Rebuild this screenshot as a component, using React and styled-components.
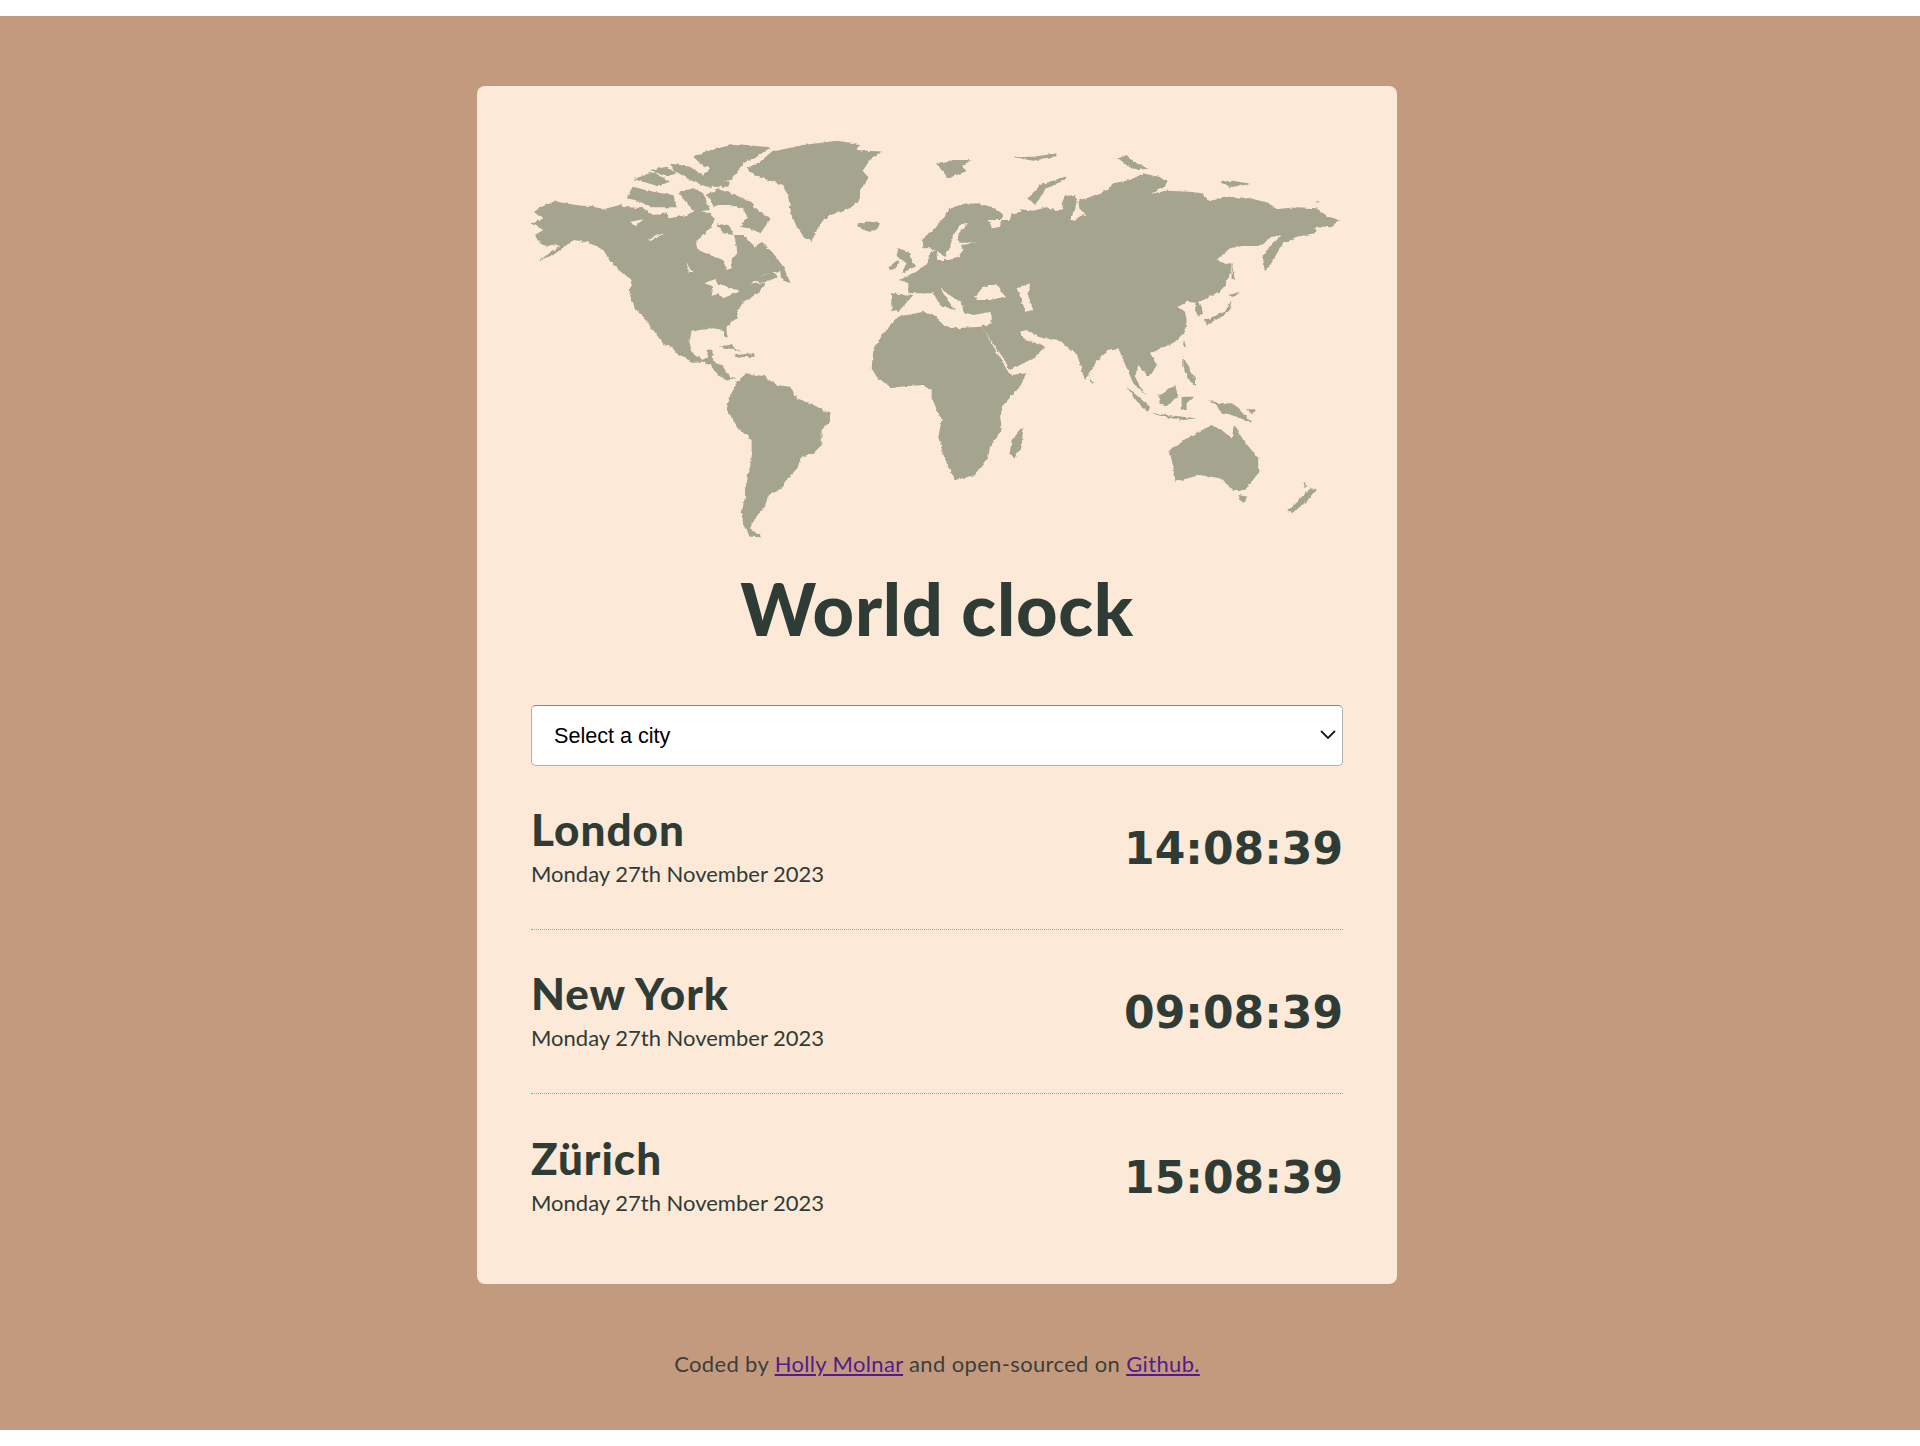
import React from "react"
import styled, { createGlobalStyle } from "styled-components"

const GlobalStyle = createGlobalStyle`
  body {
    margin: 0;
    background: #fff;
    font-family: Lato, "Noto Sans", sans-serif;
  }
`

const Page = styled.div`
  margin: 16px 0;
  height: 1414px;
  padding: 70px 46px 0 0;
  box-sizing: border-box;
  background: #c49a7f;
`

const Card = styled.main`
  width: 920px;
  height: 1198px;
  margin: 0 auto;
  padding: 52px 54px 0;
  box-sizing: border-box;
  background: #fce9d8;
  border-radius: 8px;
  color: #2f3b35;
`

const MapSvg = styled.svg`
  display: block;
  width: 812px;
  height: 402px;
`

const Title = styled.h1`
  margin: 14px 0 0;
  height: 109px;
  font-size: 72px;
  line-height: 109px;
  font-weight: 900;
  text-align: center;
  letter-spacing: 0.7px;
`

const SelectWrap = styled.div`
  position: relative;
  margin-top: 42px;
  height: 61px;
`

const CitySelect = styled.select`
  appearance: none;
  display: block;
  width: 100%;
  height: 61px;
  padding: 0 22px;
  box-sizing: border-box;
  background: #fff;
  border: 1px solid #b5b0ac;
  border-top-color: #8a8784;
  border-radius: 5px;
  font-family: "Liberation Sans", Arial, sans-serif;
  font-size: 21.6px;
  color: #000;
`

const Chevron = styled.svg`
  position: absolute;
  top: 25px;
  right: 7px;
  width: 16px;
  height: 10px;
  pointer-events: none;
`

const Row = styled.section`
  display: flex;
  justify-content: space-between;
  align-items: center;
  height: 164px;
  box-sizing: border-box;
  border-bottom: ${(p) => (p.$last ? "none" : "1px dotted #a89f95")};
`

const CityInfo = styled.div`
  margin-bottom: 3px;
`

const CityName = styled.h2`
  margin: 0;
  font-size: 44px;
  line-height: 53px;
  font-weight: 900;
  letter-spacing: 1px;
`

const CityDate = styled.div`
  margin-top: 3px;
  font-size: 22px;
  line-height: 30px;
`

const Time = styled.div`
  margin-top: 2px;
  font-family: "DejaVu Sans", Verdana, sans-serif;
  font-size: 44px;
  font-weight: 700;
`

const Footer = styled.footer`
  margin-top: 65px;
  font-size: 22px;
  line-height: 30px;
  text-align: center;
  color: #3b3f38;
  letter-spacing: 0.35px;

  a {
    color: #551a8b;
  }
`

// left half traced in one grid, right half in another, both 3 units per px
const westLand = [
  "M72 275L100 258 135 243 165 250 215 257 245 258 280 268 330 255 355 262 400 265 430 285 470 280 480 295 530 285 560 270 600 280 612 300 605 320 575 350 558 370 565 390 600 405 640 420 650 450 665 445 665 420 682 400 680 380 672 345 700 345 735 380 755 365 790 400 820 440 842 490 815 480 810 452 760 465 722 490 765 490 745 520 700 545 685 570 680 595 650 620 650 640 655 655 645 650 640 630 610 625 570 630 545 635 538 665 545 695 575 720 595 712 590 690 607 688 610 725 635 735 660 770 680 775 650 782 625 765 600 735 575 725 545 725 500 700 485 680 460 672 415 610 375 565 358 520 365 480 335 455 305 430 280 390 240 368 190 360 170 375 130 405 85 422 125 395 150 375 120 378 95 375 75 345 100 330 65 310 100 295 70 275Z",
  "M680 785L710 760 760 768 800 795 840 800 860 835 900 850 960 880 960 905 935 930 935 975 910 1000 875 1010 860 1050 825 1085 810 1110 775 1125 765 1160 735 1195 720 1225 755 1252 720 1250 700 1215 695 1180 705 1130 705 1095 725 1020 725 960 690 930 665 895 650 865 660 830Z",
  "M710 145L750 125 785 95 880 75 980 62 1050 72 1040 90 1118 95 1080 120 1060 150 1075 175 1050 210 1050 240 1020 265 960 285 930 310 905 365 885 355 860 320 845 285 835 235 820 195 760 175 720 155Z",
  "M1040 315L1070 303 1110 310 1105 325 1075 335 1050 325Z",
  "M590 225L625 208 670 222 720 245 750 275 782 297 770 312 752 340 720 325 690 322 712 290 700 268 660 255 625 255 612 260Z",
  "M350 235L368 200 430 215 490 225 500 262 430 262 375 240Z",
  "M550 110L600 90 680 72 782 82 740 110 700 130 665 180 600 187 580 165 600 145 570 130Z",
  "M370 178L430 155 480 185 440 197 400 185Z",
  "M480 130L540 140 570 160 600 180 660 185 655 200 590 200 540 180 490 150Z",
  "M505 215L550 205 580 220 600 270 555 275 530 250Z",
  "M620 310L660 320 670 345 640 340Z",
  "M725 480L790 455 805 470 760 488Z",
  "M628 680L660 675 697 697 670 688Z",
  "M672 706L730 700 735 710 690 712Z",
  "M1165 385L1195 395 1215 440 1175 460 1190 430 1160 408Z",
  "M1135 440L1165 420 1160 445 1140 450Z",
  "M1143 520L1210 525 1165 575 1145 570Z",
  "M420 150L470 140 500 160 470 170Z",
  "M285 392L305 430 320 445 300 425Z",
]

const westWater = [
  "M360 305L400 298 378 318Z",
  "M412 358L462 340 430 360Z",
  "M530 430L548 460 538 458Z",
  "M580 490L615 478 625 495 640 495 685 515 640 535 625 520 605 528 610 500Z",
]

const eastLand = [
  "M-80 690L-50 640-5 590 70 575 110 590 130 615 165 625 240 620 255 635 310 730 330 765 380 760 360 800 305 860 300 880 305 930 270 980 265 1010 225 1065 165 1080 135 1020 115 950 125 900 95 835 95 810 65 795 0 800-25 805-70 770-85 745Z",
  "M25 520L25 490 0 480 45 455 85 430 92 395 108 392 112 420 145 420 170 415 190 390 182 375 232 368 180 368 172 345 190 325 205 310 185 312 160 345 150 380 135 410 110 395 95 385 70 385 68 355 100 330 130 295 150 265 190 252 240 250 280 265 310 285 300 300 262 300 280 325 300 320 305 300 330 300 335 280 365 275 360 268 400 272 440 262 470 272 490 268 485 250 495 228 525 225 530 245 525 270 510 300 525 302 545 285 560 288 538 265 535 240 560 235 585 225 620 210 640 190 690 180 730 160 780 172 800 185 795 200 750 222 800 212 870 215 905 220 925 243 985 230 1050 235 1110 250 1125 268 1190 262 1250 265 1285 290 1320 300 1290 322 1250 318 1245 340 1190 350 1150 370 1125 410 1095 455 1088 405 1120 370 1145 345 1110 352 1085 378 1030 378 990 385 950 420 975 432 995 430 990 470 965 510 930 530 895 545 910 580 895 590 885 570 890 548 860 545 835 560 855 575 860 600 855 635 825 665 775 690 750 700 772 735 745 770 715 735 705 770 735 825 700 790 672 725 655 685 620 690 580 740 555 780 530 700 510 690 480 660 430 655 415 650 380 630 360 635 375 660 410 670 435 680 400 715 330 750 310 715 255 635 240 620 275 610 275 575 220 585 190 575 185 545 170 540 120 505 150 550 165 570 120 555 100 520 60 520Z",
  "M370 920L365 980 345 1012 328 1005 335 960Z",
  "M572 775L583 790 575 795Z",
  "M680 800L720 835 750 860 745 875 715 850Z",
  "M750 878L800 885 890 895 850 900 790 890Z",
  "M775 830L825 795 835 830 800 858 780 850Z",
  "M845 830L880 830 860 850 860 870 845 870Z",
  "M850 710L860 730 885 775 885 795 865 780 850 740Z",
  "M925 840L960 850 1000 850 1055 908 1010 890 960 875 950 855Z",
  "M808 990L870 950 935 915 965 930 995 955 1003 915 1030 960 1075 1015 1075 1060 1035 1110 1000 1110 960 1075 900 1065 825 1085 820 1040Z",
  "M1015 1125L1045 1130 1030 1152Z",
  "M1165 1170L1205 1130 1235 1105 1248 1108 1220 1145 1175 1180Z",
  "M1210 1085L1222 1100 1215 1102Z",
  "M915 600L975 575 995 540 990 570 965 590 920 615Z",
  "M985 525L1020 515 1000 532Z",
  "M995 430L1005 480 995 480Z",
  "M852 660L858 680 848 680Z",
  "M385 235L420 195 495 170 498 178 440 205 415 240 405 255Z",
  "M108 130L160 120 215 120 190 135 195 155 145 175Z",
  "M340 112L400 110 470 100 470 108 400 122Z",
  "M655 115L680 105 700 125 745 145 715 150 680 135Z",
  "M960 185L1000 182 1052 192 990 202Z",
  "M1245 245L1265 243 1255 248Z",
  "M1040 868L1070 868 1060 880Z",
]

const eastWater = [
  "M350 505L390 490 385 530 400 570 375 575 365 540Z",
  "M225 530L250 500 290 490 315 530 270 540 230 540Z",
]

const WorldMap = () => (
  <MapSvg viewBox="0 0 812 402">
    <filter id="coast" colorInterpolationFilters="sRGB">
      <feTurbulence type="fractalNoise" baseFrequency="0.22" numOctaves="2" seed="4" />
      <feDisplacementMap in="SourceGraphic" scale="3.5" xChannelSelector="R" yChannelSelector="G" />
    </filter>
    <g filter="url(#coast)">
      <g transform="translate(-21 -18) scale(0.3333)">
        {westLand.map((d) => <path key={d} d={d} fill="#a5a48e" />)}
        {westWater.map((d) => <path key={d} d={d} fill="#fce9d8" />)}
      </g>
      <g transform="translate(369 -18) scale(0.3333)">
        {eastLand.map((d) => <path key={d} d={d} fill="#a5a48e" />)}
        {eastWater.map((d) => <path key={d} d={d} fill="#fce9d8" />)}
      </g>
    </g>
  </MapSvg>
)

const cities = [
  { name: "London", time: "14:08:39" },
  { name: "New York", time: "09:08:39" },
  { name: "Zürich", time: "15:08:39" },
]

const App = () => (
  <>
    <GlobalStyle />
    <Page>
      <Card>
        <WorldMap />
        <Title>World clock</Title>
        <SelectWrap>
          <CitySelect defaultValue="">
            <option value="">Select a city</option>
            <option value="tokyo">Tokyo</option>
            <option value="paris">Paris</option>
          </CitySelect>
          <Chevron viewBox="0 0 16 10">
            <path d="M1 1l7 7 7-7" fill="none" stroke="#1a1a1a" strokeWidth="1.8" />
          </Chevron>
        </SelectWrap>
        {cities.map((city, i) => (
          <Row key={city.name} $last={i === cities.length - 1}>
            <CityInfo>
              <CityName>{city.name}</CityName>
              <CityDate>Monday 27th November 2023</CityDate>
            </CityInfo>
            <Time>{city.time}</Time>
          </Row>
        ))}
      </Card>
      <Footer>
        Coded by <a href="#holly">Holly Molnar</a> and open-sourced on <a href="#github">Github.</a>
      </Footer>
    </Page>
  </>
)

export default App
